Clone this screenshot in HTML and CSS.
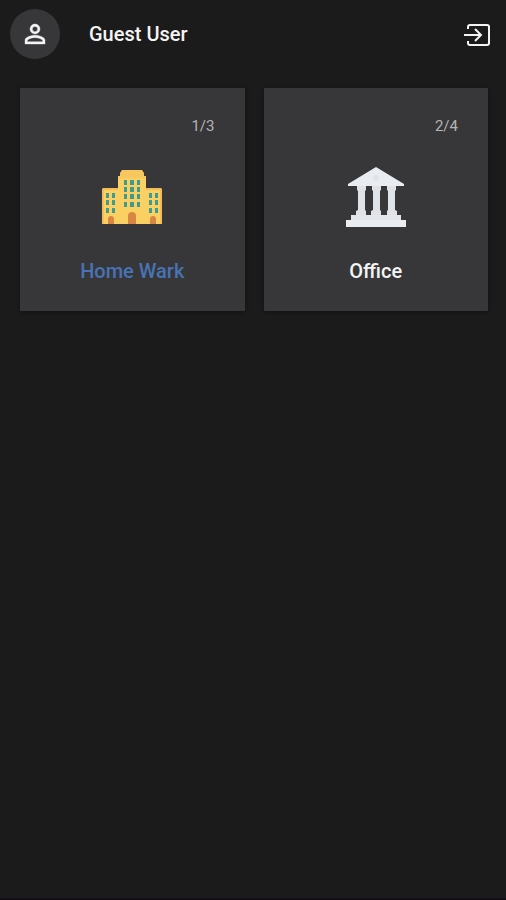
FILE: index.html
```html
<!DOCTYPE html>
<html lang="en">
<head>
<meta charset="utf-8">
<meta name="viewport" content="width=device-width, initial-scale=1">
<title>Guest User</title>
<link rel="stylesheet" href="styles.css">
</head>
<body>
<header class="topbar">
  <button class="avatar" type="button" aria-label="Profile">
    <svg width="30" height="30" viewBox="0 0 24 24" fill="currentColor" stroke="currentColor" stroke-width=".3" aria-hidden="true">
      <path d="M12 5.9a2.1 2.1 0 1 1 0 4.2 2.1 2.1 0 0 1 0-4.2m0 9c2.97 0 6.1 1.46 6.1 2.1v1.1H5.9V17c0-.64 3.13-2.1 6.1-2.1M12 4a4 4 0 1 0 0 8 4 4 0 0 0 0-8zm0 9c-2.67 0-8 1.34-8 4v3h16v-3c0-2.66-5.33-4-8-4z"/>
    </svg>
  </button>
  <h1 class="username">Guest User</h1>
  <button class="signout" type="button" aria-label="Sign out">
    <svg width="26" height="24" viewBox="0 0 26 24" fill="none" stroke="currentColor" stroke-width="2" aria-hidden="true">
      <path d="M4 7V5Q4 3 6 3H23Q25 3 25 5V21Q25 23 23 23H6Q4 23 4 21V19"/>
      <path d="M0 13H17M11 7L17 13L11 19"/>
    </svg>
  </button>
</header>
<main class="grid">
  <a class="card" href="#home">
    <span class="count">1/3</span>
    <svg class="icon" viewBox="0 0 60 60" aria-hidden="true">
      <path fill="#f4bd58" d="M0 22L1 21H17V57H0zM43 21H59L60 22V57H43z"/>
      <path fill="#fbd062" d="M2 23H17V57H2zM43 23H58V57H43z"/>
      <path fill="#fbd062" d="M16 9H44V57H16z"/>
      <path fill="#f8c65e" d="M18 6L20 3H40L42 6V9H44V11H16V9H18z"/>
      <g fill="#3d9b91">
        <path d="M22 13h3v5h-3zM28 13h4v5h-4zM35 13h3v5h-3zM22 20h3v5h-3zM28 20h4v5h-4zM35 20h3v5h-3zM22 27h3v5h-3zM28 27h4v5h-4zM35 27h3v5h-3zM22 35h3v5h-3zM28 35h4v5h-4zM35 35h3v5h-3z"/>
        <path d="M4 26h3v5H4zM10 26h3v5h-3zM4 33h3v5H4zM10 33h3v5h-3zM4 41h3v5H4zM10 41h3v5h-3zM47 26h3v5h-3zM53 26h3v5h-3zM47 33h3v5h-3zM53 33h3v5h-3zM47 41h3v5h-3zM53 41h3v5h-3z"/>
      </g>
      <path fill="#d98642" d="M26 57V49a4 4 0 0 1 8 0V57zM6 57V52a3 3 0 0 1 6 0V57zM48 57V52a3 3 0 0 1 6 0V57z"/>
    </svg>
    <span class="label label-active">Home Wark</span>
  </a>
  <a class="card" href="#office">
    <span class="count">2/4</span>
    <svg class="icon" viewBox="0 0 60 60" aria-hidden="true">
      <path fill="#dfe2e7" d="M11 19H20V23L19 24V43L20 44V49H10V44L12 43V24L11 23zM26 19H35V23L34 24V43L35 44V49H25V44L27 43V24L26 23zM41 19H50V23L49 24V43L51 44V49H41V44L42 43V24L41 23z"/>
      <path fill="#e9ecf1" d="M30 0L58 17V19H2V17z"/>
      <circle cx="30" cy="11" r="3" fill="#e0e4e9"/>
      <path fill="#e2e5ea" d="M5 48H55V54H5z"/>
      <path fill="#e9ecf1" d="M0 53H60V60H0z"/>
    </svg>
    <span class="label">Office</span>
  </a>
</main>
</body>
</html>
```
FILE: styles.css
```css
* {
  box-sizing: border-box;
}

body {
  margin: 0;
  min-height: 100vh;
  background: #1b1b1b;
  border-bottom: 2px solid #150d14;
  color: #f4f4f4;
  font-family: Roboto, "Liberation Sans", sans-serif;
}

button {
  padding: 0;
  border: 0;
  background: none;
  color: inherit;
  cursor: pointer;
}

.topbar {
  display: flex;
  align-items: center;
  height: 68px;
  padding: 0 16px 0 10px;
}

.avatar {
  display: grid;
  place-items: center;
  width: 50px;
  height: 50px;
  border-radius: 50%;
  background: #373739;
}

.username {
  flex: 1;
  margin: 0 0 0 29px;
  font-size: 20px;
  font-weight: 500;
  line-height: 24px;
}

.signout svg {
  display: block;
}

.grid {
  display: grid;
  grid-template-columns: 1fr 1fr;
  gap: 19px;
  padding: 20px 18px 20px 20px;
}

.card {
  display: flex;
  flex-direction: column;
  align-items: center;
  padding: 28px 30px;
  background: #373739;
  box-shadow: 0 1px 4px rgba(0, 0, 0, 0.4);
  color: inherit;
  text-decoration: none;
}

.count {
  align-self: flex-end;
  color: #b4b4b4;
  font-size: 15px;
  line-height: 20px;
}

.icon {
  width: 60px;
  height: 60px;
  margin: 31px 0 32px;
}

.label {
  font-size: 20px;
  font-weight: 500;
  line-height: 24px;
}

.label-active {
  color: #4873b4;
}
```
